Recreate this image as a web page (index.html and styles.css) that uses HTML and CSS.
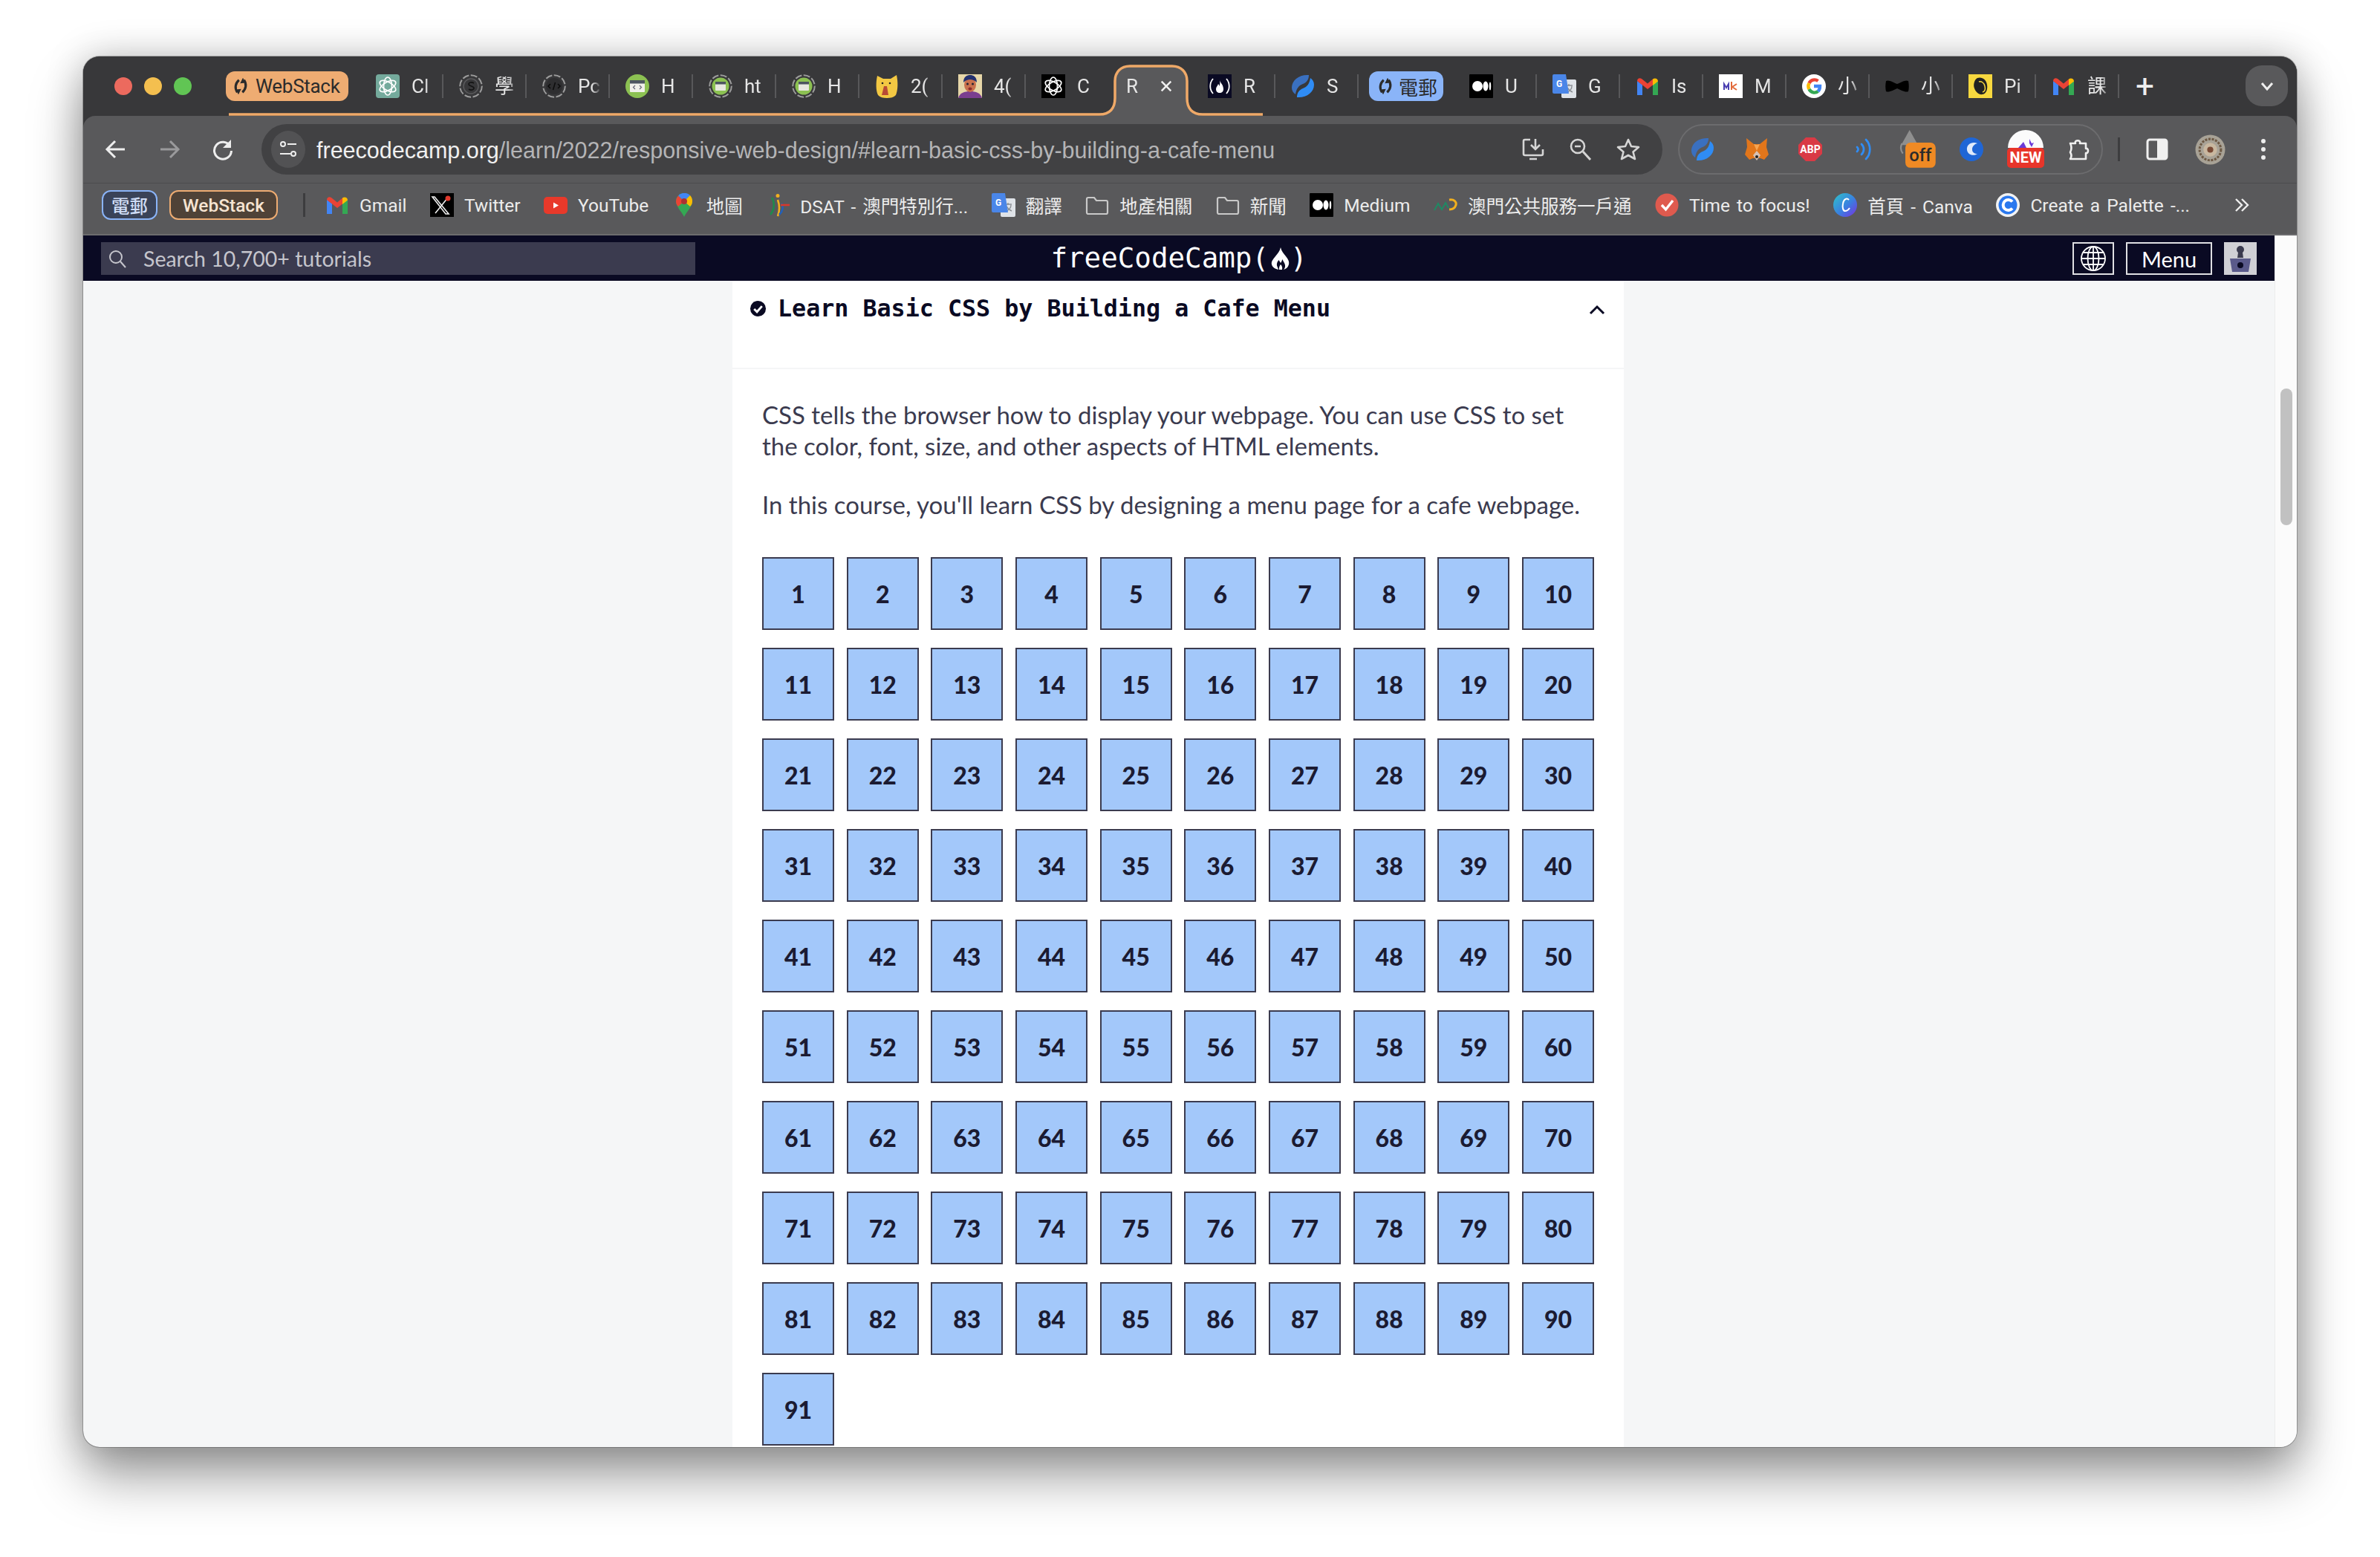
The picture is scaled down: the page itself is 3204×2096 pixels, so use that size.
FILE: index.html
```html
<!DOCTYPE html>
<html>

<head>
    <meta charset="utf-8">
    <title>Responsive Web Design - freeCodeCamp</title>
    <link rel="stylesheet" href="styles.css">
</head>

<body>
    <svg class="defs" xmlns="http://www.w3.org/2000/svg">
        <symbol id="i-swirl" viewBox="0 0 32 32"><g fill="none" stroke="currentColor" stroke-width="4.200"><path d="M13 5C6 11 5 20 10 27"/><path d="M19 27C26 21 27 12 22 5"/></g><path fill="currentColor" d="M7 22l10-1-5 10zM25 10l-10 1 5-10z"/></symbol>
        <symbol id="i-gpt" viewBox="0 0 32 32"><g fill="none" stroke="currentColor" stroke-width="1.700"><ellipse cx="16" cy="16" rx="5.500" ry="12"/><ellipse cx="16" cy="16" rx="5.500" ry="12" transform="rotate(60 16 16)"/><ellipse cx="16" cy="16" rx="5.500" ry="12" transform="rotate(120 16 16)"/></g></symbol>
        <symbol id="i-ring" viewBox="0 0 32 32"><circle cx="16" cy="16" r="14.800" fill="none" stroke="#9c9c9c" stroke-width="2" stroke-dasharray="9 2.500"/></symbol>
        <symbol id="i-ring-s" viewBox="0 0 32 32"><use href="#i-ring" width="32" height="32"/><circle cx="16" cy="16" r="10" fill="#38383a" stroke="#5a5a5c" stroke-width="1.500"/><path d="M20 12c-3-2-7-1-7 1.500s7 2.500 7 5-4 3.500-7 1.500" fill="none" stroke="#141414" stroke-width="1.600"/></symbol>
        <symbol id="i-ring-code" viewBox="0 0 32 32"><use href="#i-ring" width="32" height="32"/><circle cx="16" cy="16" r="11" fill="#2e2e30"/><path d="M11 13l-3 3 3 3M21 13l3 3-3 3M17.500 11l-3 10" fill="none" stroke="#0c0c0c" stroke-width="1.500"/></symbol>
        <symbol id="i-window" viewBox="0 0 32 32"><circle cx="16" cy="16" r="16" fill="#8cc152"/><rect x="6" y="8" width="20" height="16" rx="1" fill="#f0f0ea"/><rect x="6" y="8" width="20" height="4.500" fill="#4d5560"/><path d="M13 15l-2.500 2.500 2.500 2.500M19 15l2.500 2.500-2.500 2.500" fill="none" stroke="#667" stroke-width="1.200"/></symbol>
        <symbol id="i-ring-window" viewBox="0 0 32 32"><use href="#i-ring" width="32" height="32"/><circle cx="16" cy="16" r="11.500" fill="#8cc152"/><rect x="9" y="10" width="14" height="12" rx="1" fill="#e8e8e0"/><rect x="9" y="10" width="14" height="3.500" fill="#4d5560"/></symbol>
        <symbol id="i-gmail" viewBox="0 0 32 32"><path fill="#4285f4" d="M2 28V9l7 5v14z"/><path fill="#34a853" d="M23 28V14l7-5v19z"/><path fill="#ea4335" d="M2 9c0-3 3-5 6-3l8 6.500V20L2 9z"/><path fill="#ea4335" d="M16 12.500l7-6v8l-7 5.500z"/><path fill="#fbbc04" d="M23 6.500c3-2 7-.500 7 3L23 15z"/></symbol>
        <symbol id="i-x" viewBox="0 0 32 32"><rect width="32" height="32" fill="#000"/><path d="M6 5l19 23h-4L3 5zM24 6L7 27" fill="none" stroke="#eee" stroke-width="1.600"/><circle cx="24" cy="7" r="3.500" fill="#e0392d"/></symbol>
        <symbol id="i-yt" viewBox="0 0 32 32"><rect y="5" width="32" height="23" rx="5" fill="#e8392a"/><path d="M13 12.500l7 4-7 4z" fill="#fff"/></symbol>
        <symbol id="i-map" viewBox="0 0 32 32"><path d="M16 32C12 24 5 18 5 11a11 11 0 0 1 22 0c0 7-7 13-11 21z" fill="#34a853"/><path d="M8 3.500A11 11 0 0 1 24 3L16 11z" fill="#4285f4"/><path d="M5 11a11 11 0 0 1 3-7.500L16 11l-8 7C6 16 5 14 5 11z" fill="#ea4335"/><path d="M24 3a11 11 0 0 1 3 8c0 3-1 5-3 7l-8-7z" fill="#fbbc04"/><circle cx="16" cy="11" r="4" fill="#a33"/></symbol>
        <symbol id="i-dsat" viewBox="0 0 32 32"><g fill="none" stroke-width="2.600"><path d="M8 6c4 6 4 16-2 23" stroke="#1f8a4c"/><path d="M16 9c3 8 3 14 0 22" stroke="#f2b01e"/><path d="M21 14c4 6 1 11-3 15" stroke="#2460b8"/><path d="M20 16h12" stroke="#d8382c"/></g><circle cx="16" cy="3.500" r="2.500" fill="#f2b01e"/></symbol>
        <symbol id="i-gtrans" viewBox="0 0 32 32"><rect x="12" y="7" width="20" height="25" rx="2" fill="#dfe3e8"/><path d="M18 15h9M22 13v3M20 24c4-2 6-5 6-8M20 18c2 3 4 5 7 6" stroke="#8b8f94" stroke-width="1.400" fill="none"/><path d="M2 0h16l4 26H2a2 2 0 0 1-2-2V2a2 2 0 0 1 2-2z" fill="#4a86e8"/></symbol>
        <symbol id="i-folder" viewBox="0 0 32 32"><path d="M2 8a2 2 0 0 1 2-2h8l3 4h13a2 2 0 0 1 2 2v14a2 2 0 0 1-2 2H4a2 2 0 0 1-2-2z" fill="none" stroke="#c9c9c9" stroke-width="2.200"/></symbol>
        <symbol id="i-medium" viewBox="0 0 32 32"><rect width="32" height="32" rx="1" fill="#000"/><circle cx="11" cy="16" r="7" fill="#fff"/><ellipse cx="22" cy="16" rx="3.500" ry="6.500" fill="#fff"/><ellipse cx="28" cy="16" rx="1.200" ry="5.500" fill="#fff"/></symbol>
        <symbol id="i-macau" viewBox="0 0 32 32"><path d="M1 23l5-9 5 8 5-9 4 7" fill="none" stroke="#1f8a64" stroke-width="2"/><path d="M21 9c7-1 10 3 9 7-1 3-4 6-9 6" fill="none" stroke="#f2b01e" stroke-width="3"/></symbol>
        <symbol id="i-focus" viewBox="0 0 32 32"><circle cx="16" cy="16" r="15.500" fill="#df5a4e"/><path d="M9 16l5.500 6L24 10" fill="none" stroke="#fff" stroke-width="3.400"/></symbol>
        <linearGradient id="g-canva" x1="0" y1="0" x2="1" y2="1"><stop offset="0" stop-color="#2fc4c9"/><stop offset=".55" stop-color="#3a7fe0"/><stop offset="1" stop-color="#7a30e0"/></linearGradient>
        <symbol id="i-canva" viewBox="0 0 32 32"><circle cx="16" cy="16" r="16" fill="url(#g-canva)"/><path d="M21 9c-3-3-7-1-8 5-1 5 0 10 3 10 2 0 4-1 6-4" fill="none" stroke="#fff" stroke-width="2"/></symbol>
        <symbol id="i-palette" viewBox="0 0 32 32"><circle cx="16" cy="16" r="16" fill="#f2f2f2"/><circle cx="16" cy="16" r="12.500" fill="#2a78ee"/><path d="M22 11.500a7 7 0 1 0 0 9" fill="none" stroke="#fff" stroke-width="4"/></symbol>
        <symbol id="i-s" viewBox="0 0 32 32"><path d="M24 1C11 0 1 8 1 18c0 4 2 7 5 9 1-7 4-12 10-14 5-2 8-6 8-12z" fill="#3a70c0"/><path d="M8 31c13 1 23-7 23-17 0-4-2-7-5-9-1 7-4 12-10 14-5 2-8 6-8 12z" fill="#2f8cf4"/></symbol>
        <symbol id="i-cat" viewBox="0 0 32 32"><path d="M3 2l8 4h10l8-5c2 9 2 20-1 27-3 3-7 4-12 4s-9-1-12-4C1 22 1 11 3 2z" fill="#f3c843"/><path d="M12 16l-3 12h9l-2-12z" fill="#b84a35"/><circle cx="10" cy="12" r="1.300" fill="#222"/><circle cx="20" cy="12" r="1.300" fill="#222"/></symbol>
        <symbol id="i-face" viewBox="0 0 32 32"><rect width="32" height="32" fill="#e6d6a8"/><path d="M0 32c2-7 8-9 16-9s14 2 16 9z" fill="#7a3f8f"/><ellipse cx="16" cy="14" rx="8" ry="10" fill="#c9714d"/><path d="M7 11c0-8 5-10 9-10s9 2 9 10c-3-3-6-4-9-4s-6 1-9 4z" fill="#23306e"/><circle cx="12.500" cy="13" r="1.500" fill="#223"/><circle cx="19.500" cy="13" r="1.500" fill="#223"/><ellipse cx="16" cy="19.500" rx="2.500" ry="2" fill="#8c2b2b"/></symbol>
        <symbol id="i-fcc" viewBox="0 0 32 32"><rect width="32" height="32" fill="#0a0a23"/><path d="M7 6C2 12 2 20 7 26M25 6c5 6 5 14 0 20" fill="none" stroke="#fff" stroke-width="1.800"/><path d="M16 8c1 4 5 6 5 12 0 3-2 5-5 5s-5-2-5-5c0-3 2-4 3-7 1 1 1.500 2 1.500 3 1-2 1-5 .500-8z" fill="#fff"/></symbol>
        <symbol id="i-google" viewBox="0 0 32 32"><circle cx="16" cy="16" r="16" fill="#fff"/><g fill="none" stroke-width="4.400"><path d="M9.500 12a8 8 0 0 1 12-3" stroke="#ea4335"/><path d="M9.500 12a8 8 0 0 0 0 8" stroke="#fbbc04"/><path d="M9.500 20a8 8 0 0 0 12 3" stroke="#34a853"/><path d="M21.500 23c1.500-1.500 2.500-3.500 2.500-7h-8" stroke="#4285f4"/></g></symbol>
        <symbol id="i-mk" viewBox="0 0 32 32"><rect width="32" height="32" fill="#fff"/><path d="M7 21v-8l3 5 3-5v8" fill="none" stroke="#4a3fb0" stroke-width="2"/><path d="M17 10v11M24 13l-6 4 6 4" fill="none" stroke="#e26a3b" stroke-width="2"/></symbol>
        <symbol id="i-bow" viewBox="0 0 32 32"><path d="M1 9c4-2 10 2 15 4 5-2 11-6 15-4 1 5 1 10 0 14-4 2-10-2-15-4-5 2-11 6-15 4-1-4-1-9 0-14z" fill="#000"/></symbol>
        <symbol id="i-chimp" viewBox="0 0 32 32"><rect width="32" height="32" fill="#f7d83f"/><path d="M12 5c6-2 12 2 13 9 1 6-1 12-6 13-5 1-9-3-11-8-2-5 0-12 4-14z" fill="#222"/><path d="M14 10c3-1 7 1 8 6 1 4 0 7-3 8" fill="none" stroke="#f7d83f" stroke-width="1.500"/></symbol>
        <symbol id="i-fox" viewBox="0 0 32 32"><path d="M2 1l10 8h8l10-8-1 12 3 10-6 7-5-2h-10l-5 2-6-7 3-10z" fill="#e2761b"/><path d="M12 9l4 9 4-9-4 1z" fill="#f6a552"/><path d="M11 24l5-6 5 6-5 7z" fill="#d7c1b3"/><circle cx="16" cy="26" r="2" fill="#222"/></symbol>
        <symbol id="i-waves" viewBox="0 0 32 32"><g fill="none" stroke="#2f8cf4" stroke-width="2.800" stroke-linecap="round"><path d="M7 13c2 2 2 4 0 6"/><path d="M13 9c4 4 4 10 0 14"/><path d="M19 3c7 7 7 19 0 26"/></g></symbol>
        <symbol id="i-blue-c" viewBox="0 0 32 32"><circle cx="16" cy="16" r="16" fill="#1f66d6"/><path d="M24 8c-7-3-15 1-14 9 1 6 8 9 14 5-4 0-7-2-7-6s3-7 7-8z" fill="#dfeafb"/></symbol>
        <symbol id="i-puzzle" viewBox="0 0 32 32"><path d="M4 8h7c-2-5 8-5 6 0h8v7c4-1 4 7 0 6v8H4c2-3 2-6 0-9 2-4 2-8 0-12z" fill="none" stroke="#f0f0f0" stroke-width="2.600" stroke-linejoin="round"/></symbol>
    </svg>

    <div class="window">
        <div class="tabstrip">
            <svg class="tab-outline" width="1600" height="80">
                <path fill="#59595b" d="M1368 80C1382 78 1389 70 1389 56V33C1389 21 1397 13 1409 13H1466C1478 13 1486 21 1486 33V56C1486 70 1493 78 1507 80z"/>
                <path fill="none" stroke="#efa968" stroke-width="3.500" d="M196 78H1368C1382 78 1389 70 1389 56V33C1389 21 1397 13 1409 13H1466C1478 13 1486 21 1486 33V56C1486 70 1493 78 1507 78H1588"/>
            </svg>
            <div class="lights">
                <span class="light red"></span>
                <span class="light yellow"></span>
                <span class="light green"></span>
            </div>
            <div class="tabs">
                <div class="group orange"><svg class="ico-s"><use href="#i-swirl"/></svg>WebStack</div>
                <div class="tab"><svg class="ico gpt-green"><use href="#i-gpt"/></svg><span class="tab-title">Cl</span></div>
                <div class="tab"><svg class="ico"><use href="#i-ring-s"/></svg><span class="tab-title">學</span></div>
                <div class="tab"><svg class="ico"><use href="#i-ring-code"/></svg><span class="tab-title">Pc</span></div>
                <div class="tab"><svg class="ico"><use href="#i-window"/></svg><span class="tab-title">H</span></div>
                <div class="tab"><svg class="ico"><use href="#i-ring-window"/></svg><span class="tab-title">ht</span></div>
                <div class="tab"><svg class="ico"><use href="#i-ring-window"/></svg><span class="tab-title">H</span></div>
                <div class="tab"><svg class="ico"><use href="#i-cat"/></svg><span class="tab-title">2(</span></div>
                <div class="tab"><svg class="ico"><use href="#i-face"/></svg><span class="tab-title">4(</span></div>
                <div class="tab no-sep"><svg class="ico gpt-black"><use href="#i-gpt"/></svg><span class="tab-title">C</span></div>
                <div class="tab active no-sep"><span class="tab-title">R</span>
                    <svg class="tab-close" viewBox="0 0 20 20"><path d="M3 3l14 14M17 3L3 17" fill="none" stroke="#eee" stroke-width="2.800"/></svg>
                </div>
                <div class="tab"><svg class="ico"><use href="#i-fcc"/></svg><span class="tab-title">R</span></div>
                <div class="tab"><svg class="ico"><use href="#i-s"/></svg><span class="tab-title">S</span></div>
                <div class="group-cell"><div class="group blue"><svg class="ico-s"><use href="#i-swirl"/></svg>電郵</div></div>
                <div class="tab"><svg class="ico"><use href="#i-medium"/></svg><span class="tab-title">U</span></div>
                <div class="tab"><svg class="ico" viewBox="0 0 32 32"><use href="#i-gtrans" width="32" height="32"/><text class="g-letter" x="9" y="17">G</text></svg><span class="tab-title">G</span></div>
                <div class="tab"><svg class="ico"><use href="#i-gmail"/></svg><span class="tab-title">Is</span></div>
                <div class="tab"><svg class="ico"><use href="#i-mk"/></svg><span class="tab-title">M</span></div>
                <div class="tab"><svg class="ico"><use href="#i-google"/></svg><span class="tab-title">小</span></div>
                <div class="tab"><svg class="ico"><use href="#i-bow"/></svg><span class="tab-title">小</span></div>
                <div class="tab"><svg class="ico"><use href="#i-chimp"/></svg><span class="tab-title">Pi</span></div>
                <div class="tab"><svg class="ico"><use href="#i-gmail"/></svg><span class="tab-title">課</span></div>
                <div class="new-tab">+</div>
            </div>
            <div class="tab-menu">
                <svg width="24" height="24" viewBox="0 0 24 24"><path d="M5 8l7 8 7-8" fill="none" stroke="#eee" stroke-width="3"/></svg>
            </div>
        </div>

        <div class="toolbar">
            <div class="nav-btns">
                <svg class="nav-btn" viewBox="0 0 32 32"><path d="M28 16H5M15 5L4 16l11 11" fill="none" stroke="#eee" stroke-width="3"/></svg>
                <svg class="nav-btn" viewBox="0 0 32 32"><path d="M4 16h23M17 5l11 11-11 11" fill="none" stroke="#9a9a9c" stroke-width="3"/></svg>
                <svg class="nav-btn" viewBox="0 0 32 32"><path d="M26 12A11.500 11.500 0 1 0 27.500 18" fill="none" stroke="#eee" stroke-width="3"/><path d="M27 3v11H16z" fill="#eee"/></svg>
            </div>
            <div class="omnibox">
                <div class="tune">
                    <svg width="26" height="26" viewBox="0 0 26 26"><g fill="none" stroke="#eee" stroke-width="2"><circle cx="6" cy="6" r="3"/><path d="M12 6h12M2 19h14"/><circle cx="20" cy="19" r="3"/></g></svg>
                </div>
                <div class="url">freecodecamp.org<span class="url-path">/learn/2022/responsive-web-design/#learn-basic-css-by-building-a-cafe-menu</span></div>
                <div class="omni-icons">
                    <svg class="ico" viewBox="0 0 32 32"><path d="M12 3H5a2 2 0 0 0-2 2v17a2 2 0 0 0 2 2h22a2 2 0 0 0 2-2v-6M19 2v14M13 10l6 6 6-6M11 29h10" fill="none" stroke="#d5d5d5" stroke-width="2.600"/></svg>
                    <svg class="ico" viewBox="0 0 32 32"><circle cx="12" cy="12" r="9" fill="none" stroke="#d5d5d5" stroke-width="2.600"/><path d="M19 19l10 11" stroke="#d5d5d5" stroke-width="3"/><path d="M8 12h8" stroke="#d5d5d5" stroke-width="2.600"/></svg>
                    <svg class="ico" viewBox="0 0 32 32"><path d="M16 3l4 9 10 1-7.500 6.500L25 29l-9-5-9 5 2.500-9.500L2 13l10-1z" fill="none" stroke="#d5d5d5" stroke-width="2.600" stroke-linejoin="round"/></svg>
                </div>
            </div>
            <div class="ext-pill">
                <div class="ext"><svg class="ico"><use href="#i-s"/></svg></div>
                <div class="ext"><svg class="ico"><use href="#i-fox"/></svg></div>
                <div class="ext"><svg class="ico" viewBox="0 0 32 32"><path d="M10 0h12l10 10v12L22 32H10L0 22V10z" fill="#d93a45"/><text x="16" y="21" text-anchor="middle" font-family="Roboto, sans-serif" font-size="14" font-weight="700" fill="#fff">ABP</text></svg></div>
                <div class="ext"><svg class="ico"><use href="#i-waves"/></svg></div>
                <div class="ext"><svg class="ext-wide" viewBox="0 0 42 46"><path d="M11 0l10 18H1z" fill="#8f8f8f"/><path d="M2 16c-2 4-2 8 1 12" stroke="#8f8f8f" fill="none" stroke-width="2"/><rect x="6" y="15" width="36" height="30" rx="6" fill="#f08a24"/><text x="24" y="37" text-anchor="middle" font-family="Roboto, sans-serif" font-size="21" font-weight="500" fill="#2b2b2b">off</text></svg></div>
                <div class="ext"><svg class="ico"><use href="#i-blue-c"/></svg></div>
                <div class="ext"><svg class="ext-wide" viewBox="0 0 50 52"><path d="M1 24a24 24 0 0 1 48 0z" fill="#fbfbfb"/><path d="M15 24l7-8 4 8zM30 12l3 6 3-1-3 6-3-5z" fill="#6a3ad8"/><rect y="24" width="50" height="27" rx="5" fill="#e8352a"/><text x="25" y="44" text-anchor="middle" font-family="Roboto, sans-serif" font-size="20" font-weight="700" fill="#fff">NEW</text></svg></div>
                <div class="ext"><svg class="ico"><use href="#i-puzzle"/></svg></div>
            </div>
            <div class="tool-sep"></div>
            <div class="tool-right">
                <div class="ext"><svg class="ico" viewBox="0 0 32 32"><rect x="3" y="3" width="26" height="26" rx="3" fill="none" stroke="#f0f0f0" stroke-width="3"/><rect x="16" y="3" width="13" height="26" fill="#f0f0f0"/></svg></div>
                <div class="ext"><svg class="avatar-ring" viewBox="0 0 40 40"><circle cx="20" cy="20" r="19.500" fill="#a8a296"/><circle cx="20" cy="20" r="14" fill="none" stroke="#6e5a45" stroke-width="3" stroke-dasharray="3 1.500"/><circle cx="20" cy="20" r="9" fill="#c9b8a0"/><circle cx="20" cy="20" r="4" fill="#7a4a35"/></svg></div>
                <div class="ext"><svg width="10" height="32" viewBox="0 0 10 32"><circle cx="5" cy="5" r="3" fill="#eee"/><circle cx="5" cy="16" r="3" fill="#eee"/><circle cx="5" cy="27" r="3" fill="#eee"/></svg></div>
            </div>
        </div>

        <div class="bookmarks">
            <div class="chip blue">電郵</div>
            <div class="chip orange">WebStack</div>
            <div class="bm-sep"></div>
            <div class="bm"><svg class="ico"><use href="#i-gmail"/></svg>Gmail</div>
            <div class="bm"><svg class="ico"><use href="#i-x"/></svg>Twitter</div>
            <div class="bm"><svg class="ico"><use href="#i-yt"/></svg>YouTube</div>
            <div class="bm"><svg class="ico"><use href="#i-map"/></svg>地圖</div>
            <div class="bm"><svg class="ico"><use href="#i-dsat"/></svg>DSAT - 澳門特別行...</div>
            <div class="bm"><svg class="ico" viewBox="0 0 32 32"><use href="#i-gtrans" width="32" height="32"/><text class="g-letter" x="9" y="17">G</text></svg>翻譯</div>
            <div class="bm"><svg class="ico"><use href="#i-folder"/></svg>地產相關</div>
            <div class="bm"><svg class="ico"><use href="#i-folder"/></svg>新聞</div>
            <div class="bm"><svg class="ico"><use href="#i-medium"/></svg>Medium</div>
            <div class="bm"><svg class="ico"><use href="#i-macau"/></svg>澳門公共服務一戶通</div>
            <div class="bm"><svg class="ico"><use href="#i-focus"/></svg>Time to focus!</div>
            <div class="bm"><svg class="ico"><use href="#i-canva"/></svg>首頁 - Canva</div>
            <div class="bm"><svg class="ico"><use href="#i-palette"/></svg>Create a Palette -...</div>
            <div class="bm-more">
                <svg width="24" height="24" viewBox="0 0 24 24"><path d="M4 4l8 8-8 8M12 4l8 8-8 8" fill="none" stroke="#eee" stroke-width="2.400"/></svg>
            </div>
        </div>

        <div class="viewport">
            <div class="page">
                <div class="fcc-nav">
                    <div class="search">
                        <svg width="26" height="26" viewBox="0 0 26 26"><circle cx="11" cy="11" r="8" fill="none" stroke="#c5c5cc" stroke-width="2"/><path d="M17 17l7 8" stroke="#c5c5cc" stroke-width="2"/></svg>
                        <span>Search 10,700+ tutorials</span>
                    </div>
                    <div class="logo">freeCodeCamp(<svg class="flame" viewBox="0 0 25 30"><path fill="#fff" d="M13 0c1 5 4 8 7 12 3 4 5 7 4 11-1 4-4 6-7 7 2-2 3-5 1-9-1-2-2-3-2.500-5-1 2-1.500 4-2.500 5-1-2-2-3-2.500-4C8 20 7 23 9 27l1 3c-4-1-8-3-9-7-1-4 2-7 5-11 3-4 6-7 7-12z"/><path fill="#fff" d="M13 23c2 2 2.500 4 2 7h-4c-.500-3 .500-5 2-7z"/></svg>)</div>
                    <div class="nav-right">
                        <div class="nav-box globe">
                            <svg width="36" height="36" viewBox="0 0 36 36"><g fill="none" stroke="#fff" stroke-width="1.800"><circle cx="18" cy="18" r="16"/><ellipse cx="18" cy="18" rx="7.500" ry="16"/><path d="M18 2v32M2 18h32M4.500 10h27M4.500 26h27"/></g></svg>
                        </div>
                        <div class="nav-box menu">Menu</div>
                        <div class="nav-avatar">
                            <svg width="44" height="44" viewBox="0 0 44 44"><circle cx="22" cy="10" r="5" fill="#3b3b4f"/><path d="M19 14h6l1 7h-8z" fill="#3b3b4f"/><path d="M8 22h28l-3 18H11z" fill="#5a5a8a"/><circle cx="22" cy="31" r="4" fill="#0a0a23"/></svg>
                        </div>
                    </div>
                </div>
                <div class="content">
                    <div class="block">
                        <div class="block-head">
                            <svg class="check" viewBox="0 0 24 24"><circle cx="12" cy="12" r="11" fill="#0a0a23"/><path d="M6.500 12.500l4 4 7-8" fill="none" stroke="#fff" stroke-width="3"/></svg>
                            <h4>Learn Basic CSS by Building a Cafe Menu</h4>
                            <svg class="caret" viewBox="0 0 24 16"><path d="M3 13l9-9 9 9" fill="none" stroke="#0a0a23" stroke-width="3"/></svg>
                        </div>
                        <div class="block-body">
                            <p>CSS tells the browser how to display your webpage. You can use CSS to set the color, font, size, and other aspects of HTML elements.</p>
                            <p>In this course, you'll learn CSS by designing a menu page for a cafe webpage.</p>
                            <div class="steps">
                                <div class="step">1</div><div class="step">2</div><div class="step">3</div><div class="step">4</div><div class="step">5</div><div class="step">6</div><div class="step">7</div><div class="step">8</div><div class="step">9</div><div class="step">10</div>
                                <div class="step">11</div><div class="step">12</div><div class="step">13</div><div class="step">14</div><div class="step">15</div><div class="step">16</div><div class="step">17</div><div class="step">18</div><div class="step">19</div><div class="step">20</div>
                                <div class="step">21</div><div class="step">22</div><div class="step">23</div><div class="step">24</div><div class="step">25</div><div class="step">26</div><div class="step">27</div><div class="step">28</div><div class="step">29</div><div class="step">30</div>
                                <div class="step">31</div><div class="step">32</div><div class="step">33</div><div class="step">34</div><div class="step">35</div><div class="step">36</div><div class="step">37</div><div class="step">38</div><div class="step">39</div><div class="step">40</div>
                                <div class="step">41</div><div class="step">42</div><div class="step">43</div><div class="step">44</div><div class="step">45</div><div class="step">46</div><div class="step">47</div><div class="step">48</div><div class="step">49</div><div class="step">50</div>
                                <div class="step">51</div><div class="step">52</div><div class="step">53</div><div class="step">54</div><div class="step">55</div><div class="step">56</div><div class="step">57</div><div class="step">58</div><div class="step">59</div><div class="step">60</div>
                                <div class="step">61</div><div class="step">62</div><div class="step">63</div><div class="step">64</div><div class="step">65</div><div class="step">66</div><div class="step">67</div><div class="step">68</div><div class="step">69</div><div class="step">70</div>
                                <div class="step">71</div><div class="step">72</div><div class="step">73</div><div class="step">74</div><div class="step">75</div><div class="step">76</div><div class="step">77</div><div class="step">78</div><div class="step">79</div><div class="step">80</div>
                                <div class="step">81</div><div class="step">82</div><div class="step">83</div><div class="step">84</div><div class="step">85</div><div class="step">86</div><div class="step">87</div><div class="step">88</div><div class="step">89</div><div class="step">90</div>
                                <div class="step">91</div>
                            </div>
                        </div>
                    </div>
                </div>
            </div>
            <div class="scrollbar">
                <div class="scroll-thumb"></div>
            </div>
        </div>
    </div>
</body>

</html>
```

FILE: styles.css
```css
* {
    box-sizing: border-box;
}

html,
body {
    margin: 0;
    height: 2096px;
    overflow: hidden;
    background: #fff;
}

body {
    padding: 76px 112px 148px;
    font-family: 'Roboto', 'Noto Sans CJK TC', sans-serif;
}

.defs {
    width: 0;
    height: 0;
    display: block;
}

.window {
    width: 2980px;
    height: 1872px;
    display: flex;
    flex-direction: column;
    border-radius: 22px;
    overflow: hidden;
    background: #38383a;
    box-shadow: 0 0 0 1px rgba(60, 60, 60, .35), 0 40px 70px rgba(0, 0, 0, .38), 0 0 50px rgba(0, 0, 0, .22);
}

/* tab strip */
.tabstrip {
    height: 80px;
    position: relative;
    display: flex;
    background: #38383a;
    color: #e6e6e6;
    flex-shrink: 0;
}

.tab-outline {
    position: absolute;
    left: 0;
    top: 0;
}

.lights {
    width: 192px;
    padding: 28px 0 0 42px;
    display: flex;
    gap: 16px;
}

.light {
    width: 24px;
    height: 24px;
    border-radius: 50%;
}

.light.red { background: #ec6a5e; }
.light.yellow { background: #f4bf4f; }
.light.green { background: #61c554; }

.tabs {
    position: relative;
    display: flex;
    align-items: flex-start;
    width: 2724px;
    padding-top: 20px;
}

.group {
    height: 40px;
    display: flex;
    align-items: center;
    gap: 8px;
    padding: 0 14px;
    border-radius: 12px;
    font-size: 26px;
    color: #2b2b2b;
}

.group.orange {
    width: 165px;
    margin-right: 16px;
    background: #eeac72;
    white-space: nowrap;
    padding: 0 0 0 8px;
    letter-spacing: -.3px;
}

.group.blue {
    width: 100px;
    padding: 0 0 0 10px;
    gap: 6px;
    background: #8ab4f8;
}

.group-cell {
    width: 128px;
    padding-left: 14px;
}

.ico-s {
    width: 24px;
    height: 24px;
    flex-shrink: 0;
}

.tab {
    width: 112px;
    height: 32px;
    margin-top: 4px;
    padding-left: 21px;
    display: flex;
    align-items: center;
    gap: 16px;
    border-right: 2px solid #58585a;
    flex-shrink: 0;
}

.tab.no-sep {
    border-right: 0;
}

.tab.active {
    padding-left: 23px;
    gap: 14px;
    width: 112px;
}

.tab-title {
    width: 31px;
    overflow: hidden;
    font-size: 26px;
    line-height: 32px;
    white-space: nowrap;
    -webkit-mask-image: linear-gradient(to right, #000 60%, transparent);
    mask-image: linear-gradient(to right, #000 60%, transparent);
}

.tab-close {
    width: 18px;
    height: 18px;
}

.ico {
    width: 32px;
    height: 32px;
    flex-shrink: 0;
}

.g-letter {
    font-family: 'Roboto', sans-serif;
    font-size: 12px;
    font-weight: 700;
    fill: #fff;
    text-anchor: middle;
}

.gpt-green {
    background: #74aa9c;
    border-radius: 4px;
    color: #fff;
}

.gpt-black {
    background: #000;
    color: #fff;
}

.new-tab {
    margin: 0 0 0 22px;
    font-size: 44px;
    line-height: 40px;
    font-weight: 400;
    color: #eee;
}

.tab-menu {
    position: absolute;
    top: 12px;
    right: 12px;
    width: 57px;
    height: 55px;
    border-radius: 22px;
    background: #59595b;
    display: flex;
    align-items: center;
    justify-content: center;
}

/* toolbar */
.toolbar {
    height: 91px;
    display: flex;
    align-items: center;
    padding-left: 28px;
    background: #59595b;
    flex-shrink: 0;
    border-bottom: 1px solid #4c4c4e;
    border-radius: 16px 16px 0 0;
}

.nav-btns {
    display: flex;
    gap: 40px;
}

.nav-btn {
    width: 32px;
    height: 32px;
}

.omnibox {
    width: 1886px;
    height: 68px;
    margin-left: 36px;
    padding: 0 30px 0 13px;
    display: flex;
    align-items: center;
    background: #414143;
    border-radius: 34px;
}

.tune {
    width: 46px;
    height: 50px;
    border-radius: 50%;
    background: #525254;
    display: flex;
    align-items: center;
    justify-content: center;
}

.url {
    margin: 2px 0 0 15px;
    font-family: 'Liberation Sans', sans-serif;
    font-size: 30.500px;
    color: #f0f0f0;
    white-space: nowrap;
}

.url-path {
    color: #b4b4b6;
}

.omni-icons {
    margin-left: auto;
    display: flex;
    gap: 32px;
}

.ext-pill {
    width: 572px;
    height: 68px;
    margin-left: 21px;
    display: flex;
    align-items: center;
    border: 2px solid #6c6c6e;
    border-radius: 34px;
}

.ext {
    width: 71.500px;
    height: 64px;
    display: flex;
    align-items: center;
    justify-content: center;
    flex-shrink: 0;
}

.ext-pill .ext {
    width: 72.400px;
}

.ext-pill .ext:first-child {
    margin-left: -5px;
}

.ext-wide {
    width: 50px;
    height: 52px;
}

.tool-sep {
    width: 3px;
    height: 32px;
    margin-left: 20px;
    background: #3d3d3f;
}

.tool-right {
    margin-left: 14px;
    display: flex;
}

.avatar-ring {
    width: 41px;
    height: 41px;
}

/* bookmarks */
.bookmarks {
    height: 70px;
    display: flex;
    align-items: center;
    padding: 0 0 10px 25px;
    background: #59595b;
    color: #ececec;
    font-size: 24.500px;
    word-spacing: 3px;
    white-space: nowrap;
    flex-shrink: 0;
    border-bottom: 2px solid #6c6c6e;
}

.chip {
    height: 40px;
    display: flex;
    align-items: center;
    justify-content: center;
    border-radius: 12px;
    border: 2px solid;
    font-weight: 500;
    margin-right: 16px;
}

.chip.blue {
    width: 75px;
    border-color: #8ab4f8;
    background: #3a4358;
    color: #cfdcf5;
}

.chip.orange {
    width: 146px;
    border-color: #eeac72;
    background: #4f4237;
    color: #f6e4d2;
}

.bm-sep {
    width: 3px;
    height: 32px;
    margin: 0 27px 0 18px;
    background: #3d3d3f;
}

.bm {
    display: flex;
    align-items: center;
    gap: 14px;
    margin-right: 31.500px;
}

.bm-more {
    margin-left: 26px;
    display: flex;
}

/* page under the browser chrome */
.viewport {
    flex: 1;
    min-height: 0;
    display: flex;
    background: #f5f6f7;
}

.page {
    flex: 1;
    min-width: 0;
    overflow: hidden;
}

.scrollbar {
    width: 30px;
    padding: 206px 7px 0;
    background: #fbfbfb;
    border-left: 1px solid #ececec;
}

.scroll-thumb {
    width: 16px;
    height: 184px;
    border-radius: 8px;
    background: #c1c1c1;
}

.fcc-nav {
    height: 61px;
    padding: 9px 24px 8px;
    display: grid;
    grid-template-columns: 1fr auto 1fr;
    align-items: center;
    background: #0a0a23;
}

.search {
    width: 800px;
    height: 44px;
    display: flex;
    align-items: center;
    gap: 22px;
    padding-left: 9px;
    background: #3b3b4f;
    color: #c5c5cc;
    font-family: 'Lato', sans-serif;
    font-size: 28.500px;
}

.logo {
    display: flex;
    align-items: center;
    margin-top: -2px;
    font-family: 'DejaVu Sans Mono', monospace;
    font-size: 37.500px;
    line-height: 44px;
    color: #fff;
}

.flame {
    width: 25px;
    height: 30px;
    margin: 2px 1px 0 3px;
}

.nav-right {
    display: flex;
    justify-content: flex-end;
    align-items: center;
}

.nav-box {
    height: 44px;
    border: 2px solid #dfdfe2;
    display: flex;
    align-items: center;
    justify-content: center;
    color: #fff;
}

.globe {
    width: 56px;
    margin-right: 16px;
}

.menu {
    width: 116px;
    margin-right: 16px;
    font-family: 'Lato', sans-serif;
    font-size: 29px;
}

.nav-avatar {
    width: 44px;
    height: 44px;
    background: #d0d0d5;
}

.content {
    width: 1200px;
    margin: 0 0 0 874px;
    background: #fff;
    min-height: 100%;
}

.block-head {
    height: 119px;
    display: flex;
    align-items: flex-start;
    padding: 16px 24px 0;
    border-bottom: 2px solid #f5f6f7;
    color: #0a0a23;
}

.block-head h4 {
    margin: 0;
    font-family: 'DejaVu Sans Mono', monospace;
    font-size: 31.700px;
    font-weight: 700;
    line-height: 42px;
    white-space: nowrap;
}

.check {
    width: 23px;
    height: 23px;
    margin: 10px 15px 0 -1px;
    flex-shrink: 0;
}

.caret {
    width: 24px;
    height: 16px;
    margin: 15px 0 0 auto;
}

.block-body {
    padding: 40px 40px 0;
}

.block-body p {
    margin: 0 0 37px;
    font-family: 'Lato', sans-serif;
    font-size: 33px;
    line-height: 42px;
    color: #3b3b4f;
}

.steps {
    width: 1120px;
    margin-top: 50px;
    display: grid;
    grid-template-columns: repeat(10, 1fr);
    column-gap: 16.600px;
    row-gap: 24px;
}

.step {
    height: 98px;
    display: flex;
    align-items: center;
    justify-content: center;
    background: #a3c8fa;
    border: 2px solid #3b3b4f;
    font-family: 'Lato', sans-serif;
    font-size: 32px;
    font-weight: 900;
    color: #1b1b32;
}
```
